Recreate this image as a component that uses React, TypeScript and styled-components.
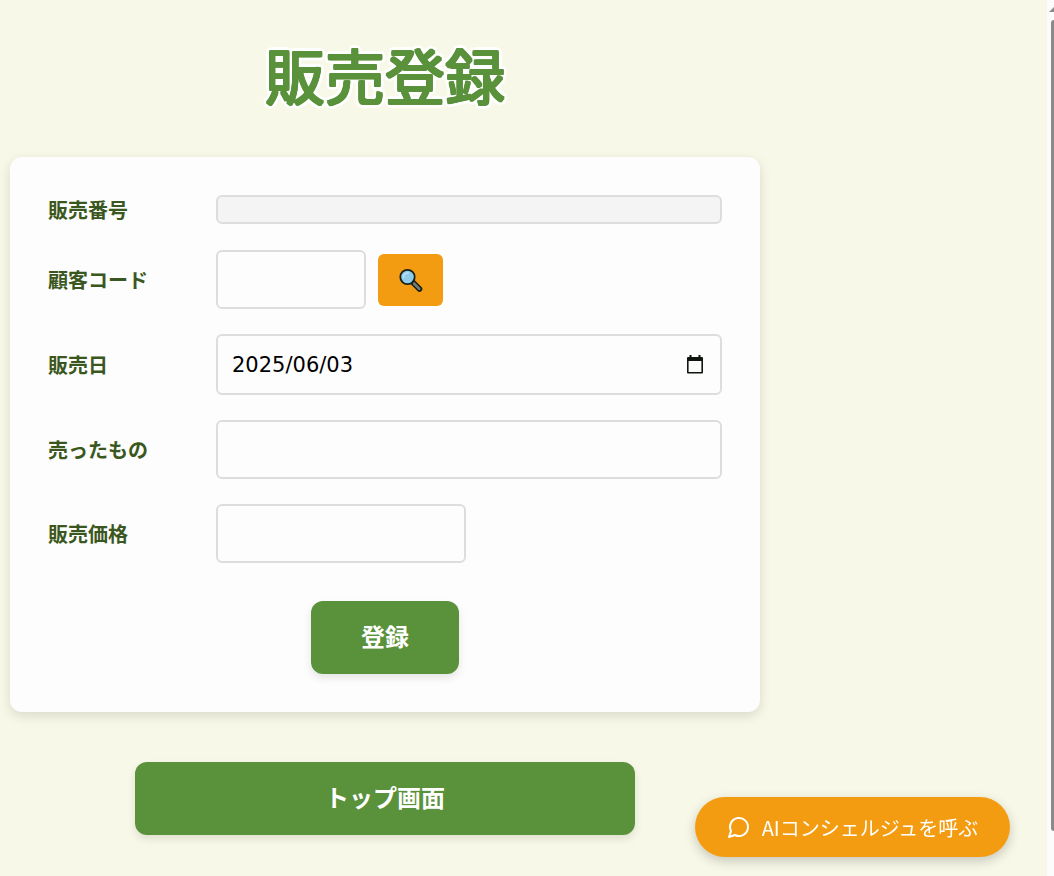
import React, { useState } from "react";
import styled, { createGlobalStyle } from "styled-components";

const green = "#5a913b";
const orange = "#f39c12";
const ink = "#3b5720";

const GlobalStyle = createGlobalStyle`
  *, *::before, *::after { box-sizing: border-box; }
  body {
    margin: 0;
    background: #f8f8e8;
    font-family: "Noto Sans CJK JP", sans-serif;
    font-size: 20px;
  }
  button, input { font: inherit; }
`;

const Shell = styled.div`
  display: flex;
  min-height: 100vh;
`;

const Main = styled.main`
  flex: 1;
  min-width: 0;
  padding: 29px 10px 40px;
`;

const Content = styled.div`
  max-width: 750px;
`;

const Title = styled.h1`
  margin: 0 0 38px;
  color: ${green};
  font-size: 60px;
  font-weight: 400;
  line-height: 90px;
  text-align: center;
  text-shadow: 1px 0 ${green}, -1px 0 ${green}, 0 1px ${green}, 0 -1px ${green},
    1px 1px ${green}, -1px 1px ${green}, 1px -1px ${green}, -1px -1px ${green},
    4px 0 #fff, -4px 0 #fff, 0 4px #fff, 0 -4px #fff,
    3px 3px #fff, -3px 3px #fff, 3px -3px #fff, -3px -3px #fff;
`;

const Card = styled.form`
  display: flex;
  flex-direction: column;
  gap: 25px;
  padding: 38px;
  border-radius: 12px;
  background: #fdfdfd;
  box-shadow: 0 4px 12px rgba(0, 0, 0, 0.12);
`;

const Row = styled.div<{ $align?: string }>`
  display: grid;
  grid-template-columns: 168px minmax(0, 1fr);
  align-items: ${(p) => p.$align ?? "center"};
`;

const Label = styled.label`
  color: ${ink};
  font-weight: 700;
  line-height: 30px;
`;

const Controls = styled.div`
  display: flex;
  align-items: center;
  gap: 12px;
`;

const Input = styled.input<{ $width?: string; $height?: number }>`
  display: block;
  width: ${(p) => p.$width ?? "100%"};
  height: ${(p) => p.$height ?? 59}px;
  padding: 0 14px;
  border: 2px solid #ddd;
  border-radius: 6px;
  background: #fdfdfd;
  color: #000;
  outline: none;

  &:read-only { background: #f4f4f4; }
  &:focus { border-color: ${green}; }
`;

const DateBox = styled.div`
  display: flex;
  align-items: center;
  height: 61px;
  padding: 0 15px 0 14px;
  border: 2px solid #ddd;
  border-radius: 6px;
`;

const DateInput = styled.input`
  flex: 1;
  min-width: 0;
  padding: 0;
  border: 0;
  outline: none;
  background: transparent;
  color: #000;
  font-family: "DejaVu Sans", sans-serif;
  font-size: 21px;
`;

const IconButton = styled.button`
  display: flex;
  padding: 0;
  border: 0;
  background: transparent;
  cursor: pointer;
`;

const SearchButton = styled(IconButton)`
  align-items: center;
  justify-content: center;
  width: 65px;
  height: 52px;
  border-radius: 6px;
  background: ${orange};
`;

const PrimaryButton = styled.button<{ $wide?: boolean }>`
  display: block;
  width: ${(p) => (p.$wide ? "500px" : "148px")};
  max-width: 100%;
  height: 73px;
  margin: ${(p) => (p.$wide ? "50px auto 0" : "13px auto 0")};
  padding: 0 0 4px;
  border: 0;
  border-radius: 12px;
  background: ${green};
  box-shadow: 0 4px 8px rgba(0, 0, 0, 0.1);
  color: #fff;
  font-size: 24px;
  font-weight: 700;
  cursor: pointer;
`;

const ChatButton = styled.button`
  position: fixed;
  right: 44px;
  bottom: 19px;
  display: flex;
  align-items: center;
  justify-content: center;
  gap: 11px;
  width: 315px;
  height: 60px;
  padding: 0;
  border: 0;
  border-radius: 30px;
  background: ${orange};
  box-shadow: 0 4px 12px rgba(0, 0, 0, 0.2);
  color: #fff;
  white-space: nowrap;
  cursor: pointer;
`;

const ScrollTrack = styled.div`
  display: flex;
  flex-direction: column;
  align-items: flex-end;
  width: 7px;
  height: 100vh;
  background: #fcfcfc;
`;

const ScrollArrow = styled.svg`
  display: block;
  width: 5px;
  height: 20px;
`;

const ScrollThumb = styled.div`
  width: 3px;
  flex: 1;
  margin-bottom: 45px;
  border-radius: 3px 0 0 3px;
  background: #8a8a8a;
`;

const MagnifierIcon = () => (
  <svg width="26" height="26" viewBox="0 0 26 26" aria-hidden="true">
    <path d="M14.5 15 21.5 22" stroke="#17201c" strokeWidth="5.6" strokeLinecap="round" />
    <path d="M16 16.5 21.3 21.8" stroke="#777b76" strokeWidth="2.6" strokeLinecap="round" />
    <circle cx="9.5" cy="10" r="7.2" fill="#8ecbea" stroke="#17201c" strokeWidth="1.8" />
    <path d="M5.5 10.5a4.6 4.6 0 0 1 4.5-4.6" fill="none" stroke="#b5def2" strokeWidth="2" strokeLinecap="round" />
  </svg>
);

const CalendarIcon = () => (
  <svg width="20" height="20" viewBox="0 0 20 20" aria-hidden="true">
    <path
      fillRule="evenodd"
      fill="#101510"
      d="M4.5 0h2v2h7V0h2v2H17a1 1 0 0 1 1 1v14.5a1 1 0 0 1-1 1H3a1 1 0 0 1-1-1V3a1 1 0 0 1 1-1h1.500V0ZM3.600 6v11h12.800V6H3.600Z"
    />
  </svg>
);

const ChatIcon = () => (
  <svg
    width="24"
    height="24"
    viewBox="0 0 24 24"
    fill="none"
    stroke="currentColor"
    strokeWidth="2"
    strokeLinecap="round"
    strokeLinejoin="round"
    aria-hidden="true"
  >
    <path d="M7.9 20A9 9 0 1 0 4 16.1L2 22Z" />
  </svg>
);

export default function App() {
  const [date, setDate] = useState("2025/06/03");

  return (
    <>
      <GlobalStyle />
      <Shell>
        <Main>
          <Content>
            <Title>販売登録</Title>
            <Card onSubmit={(e: React.FormEvent) => e.preventDefault()}>
              <Row $align="start">
                <Label htmlFor="sale-number">販売番号</Label>
                <Input id="sale-number" readOnly $height={29} />
              </Row>
              <Row>
                <Label htmlFor="customer-code">顧客コード</Label>
                <Controls>
                  <Input id="customer-code" $width="150px" />
                  <SearchButton type="button" aria-label="検索">
                    <MagnifierIcon />
                  </SearchButton>
                </Controls>
              </Row>
              <Row>
                <Label htmlFor="sale-date">販売日</Label>
                <DateBox>
                  <DateInput
                    id="sale-date"
                    value={date}
                    onChange={(e) => setDate(e.target.value)}
                  />
                  <IconButton type="button" aria-label="カレンダー">
                    <CalendarIcon />
                  </IconButton>
                </DateBox>
              </Row>
              <Row>
                <Label htmlFor="item">売ったもの</Label>
                <Input id="item" />
              </Row>
              <Row>
                <Label htmlFor="price">販売価格</Label>
                <Input id="price" $width="250px" />
              </Row>
              <PrimaryButton type="submit">登録</PrimaryButton>
            </Card>
            <PrimaryButton type="button" $wide>
              トップ画面
            </PrimaryButton>
          </Content>
        </Main>
        <ScrollTrack aria-hidden="true">
          <ScrollArrow viewBox="0 0 5 20">
            <path d="M0 12 5 7V12Z" fill="#8a8a8a" />
          </ScrollArrow>
          <ScrollThumb />
        </ScrollTrack>
      </Shell>
      <ChatButton type="button">
        <ChatIcon />
        AIコンシェルジュを呼ぶ
      </ChatButton>
    </>
  );
}
